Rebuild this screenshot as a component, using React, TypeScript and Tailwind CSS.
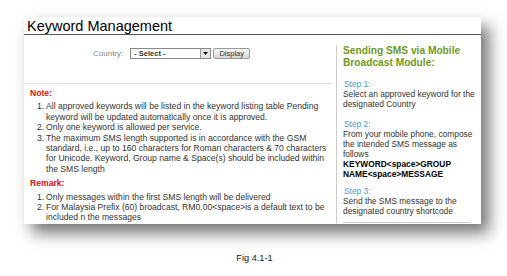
import React from "react";

const notes = [
  "All approved keywords will be listed in the keyword listing table Pending keyword will be updated automatically once it is approved.",
  "Only one keyword is allowed per service.",
  "The maximum SMS length supported is in accordance with the GSM standard, i.e., up to 160 characters for Roman characters & 70 characters for Unicode. Keyword, Group name & Space(s) should be included within the SMS length",
];

const remarks = [
  "Only messages within the first SMS length will be delivered",
  "For Malaysia Prefix (60) broadcast, RM0.00<space>is a default text to be included n the messages",
];

function NumList({ items }: { items: string[] }) {
  return (
    <div className="flex flex-col">
      {items.map((t, i) => (
        <div key={i} className="flex pl-[7px]">
          <span className="w-[9px] shrink-0">{i + 1}.</span>
          <span>{t}</span>
        </div>
      ))}
    </div>
  );
}

export default function App() {
  return (
    <div className="relative h-[276px] w-[507px] overflow-hidden bg-white font-['Liberation_Sans',Arial,sans-serif] text-[#333]">
      <div className="ml-[24px] mt-[17px] flex h-[207px] w-[457px] flex-col bg-white shadow-[8px_9px_15px_rgba(0,0,0,0.55)]">
        <div className="h-[18px] border-b border-[#555] pl-[3px] text-[14.5px] leading-[18px] text-black">
          Keyword Management
        </div>
        <div className="flex flex-1">
          <div className="w-[308px] shrink-0">
            <div className="flex h-[49px] items-start border-b border-[#ddd] pl-[69px] pt-[13px] text-[8px] leading-[10px]">
              <span className="mr-[7px] mt-[1px] text-[#888]">Country:</span>
              <div className="flex h-[11px] w-[81px] items-center border border-[#8a8a8a] bg-white pl-[3px]">
                <span className="flex-1 text-[7.5px] font-bold text-[#333]">- Select -</span>
                <span className="flex h-[9px] w-[10px] items-center justify-center border-l border-[#999] bg-[#e8e8e8]">
                  <svg width="5" height="3" viewBox="0 0 5 3">
                    <path d="M0 0h5L2.5 3z" fill="#111" />
                  </svg>
                </span>
              </div>
              <div className="ml-[2px] flex h-[11px] w-[37px] items-center justify-center rounded-[2px] border border-[#9a9a9a] bg-gradient-to-b from-[#f6f6f6] to-[#d8d8d8] text-[7.5px] text-[#333]">
                Display
              </div>
            </div>
            <div className="pl-[6px] pt-[4px] text-[8.6px] leading-[10.4px]">
              <div className="font-bold text-[#d11]">Note:</div>
              <div className="mt-[3px]">
                <NumList items={notes} />
              </div>
              <div className="mt-[4px] font-bold text-[#d11]">Remark:</div>
              <div className="mt-[3px]">
                <NumList items={remarks} />
              </div>
            </div>
          </div>
          <div className="ml-[4px] mt-[10px] mb-[1px] flex flex-1 flex-col border-l border-[#ccc] pl-[6px] text-[8.4px] leading-[10px]">
            <div className="text-[10.2px] font-bold leading-[12px] text-[#6f9a24]">
              Sending SMS via Mobile
              <br />
              Broadcast Module:
            </div>
            <div className="mt-[10px] pl-[1px] text-[#4a9ccc]">Step 1:</div>
            <div>
              Select an approved keyword for the
              <br />
              designated Country
            </div>
            <div className="mt-[10px] pl-[1px] text-[#4a9ccc]">Step 2:</div>
            <div>
              From your mobile phone, compose
              <br />
              the intended SMS message as
              <br />
              follows
            </div>
            <div className="font-bold text-black">
              KEYWORD&lt;space&gt;GROUP
              <br />
              NAME&lt;space&gt;MESSAGE
            </div>
            <div className="mt-[7px] pl-[1px] text-[#4a9ccc]">Step 3:</div>
            <div>
              Send the SMS message to the
              <br />
              designated country shortcode
            </div>
            <div className="mr-[10px] mt-auto border-b border-[#ccc]" />
          </div>
        </div>
      </div>
      <div className="mt-[29px] text-center text-[9.2px] leading-[10px] text-[#222]">
        <span className="ml-[2px]">Fig 4.1-1</span>
      </div>
    </div>
  );
}
